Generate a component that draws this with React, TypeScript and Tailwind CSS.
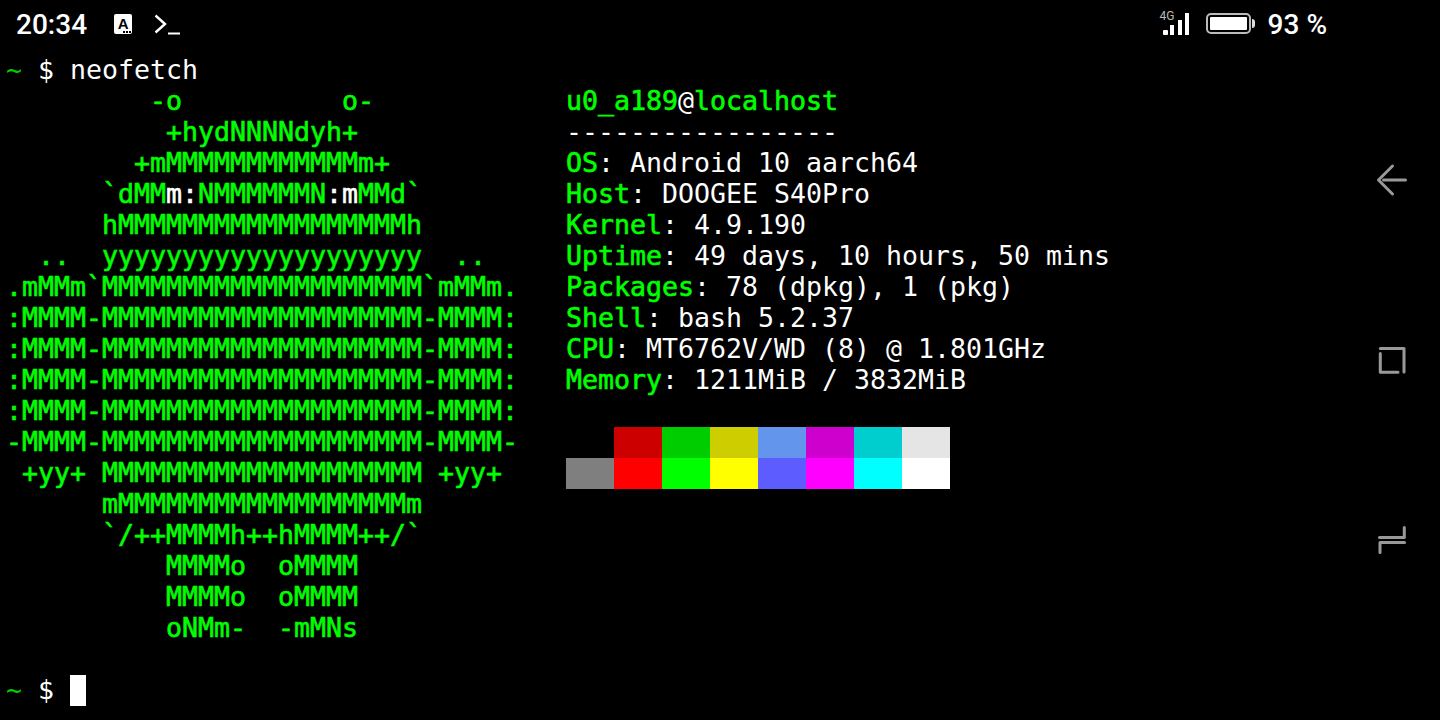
const LOGO_TOP = [
  '         -o          o-',
  '          +hydNNNNdyh+',
  '        +mMMMMMMMMMMMMm+',
]
const LOGO_BOTTOM = [
  '      hMMMMMMMMMMMMMMMMMMh',
  '  ..  yyyyyyyyyyyyyyyyyyyy  ..',
  '.mMMm`MMMMMMMMMMMMMMMMMMMM`mMMm.',
  ':MMMM-MMMMMMMMMMMMMMMMMMMM-MMMM:',
  ':MMMM-MMMMMMMMMMMMMMMMMMMM-MMMM:',
  ':MMMM-MMMMMMMMMMMMMMMMMMMM-MMMM:',
  ':MMMM-MMMMMMMMMMMMMMMMMMMM-MMMM:',
  '-MMMM-MMMMMMMMMMMMMMMMMMMM-MMMM-',
  ' +yy+ MMMMMMMMMMMMMMMMMMMM +yy+',
  '      mMMMMMMMMMMMMMMMMMMm',
  '      `/++MMMMh++hMMMM++/`',
  '          MMMMo  oMMMM',
  '          MMMMo  oMMMM',
  '          oNMm-  -mMNs',
]

const INFO = [
  ['OS', 'Android 10 aarch64'],
  ['Host', 'DOOGEE S40Pro'],
  ['Kernel', '4.9.190'],
  ['Uptime', '49 days, 10 hours, 50 mins'],
  ['Packages', '78 (dpkg), 1 (pkg)'],
  ['Shell', 'bash 5.2.37'],
  ['CPU', 'MT6762V/WD (8) @ 1.801GHz'],
  ['Memory', '1211MiB / 3832MiB'],
]

const DARK_COLORS = ['bg-[#000000]', 'bg-[#cd0000]', 'bg-[#00cd00]', 'bg-[#cdcd00]', 'bg-[#6495ed]', 'bg-[#cd00cd]', 'bg-[#00cdcd]', 'bg-[#e5e5e5]']
const LIGHT_COLORS = ['bg-[#7f7f7f]', 'bg-[#ff0000]', 'bg-[#00ff00]', 'bg-[#ffff00]', 'bg-[#5c5cff]', 'bg-[#ff00ff]', 'bg-[#00ffff]', 'bg-[#ffffff]']

const StatusBar = () => (
  <div className="h-[55px] flex items-center pl-[16px] pr-[17px] text-white font-['Roboto',sans-serif] font-medium text-[28px]">
    <span className="leading-none pb-[5px]">20:34</span>
    <div className="relative w-[18px] h-[20px] ml-[27px] mb-[8px] rounded-[2px] bg-white flex justify-center text-black">
      <span className="font-['Liberation_Sans',sans-serif] font-bold text-[15px] leading-[19px]">A</span>
      <div className="absolute right-[1px] bottom-[1px] flex gap-[1px]">
        <div className="w-[2px] h-[2px] bg-black" />
        <div className="w-[2px] h-[2px] bg-black" />
        <div className="w-[2px] h-[2px] bg-black" />
      </div>
    </div>
    <svg className="ml-[22px] mb-[6px]" width="28" height="22" viewBox="0 0 28 22" fill="none" stroke="white">
      <path d="M1.5 1.5 L11 10 L1.5 18.5" strokeWidth="2.4" />
      <path d="M14 19.5 H26" strokeWidth="2" />
    </svg>
    <div className="flex-1" />
    <div className="relative w-[30px] h-[26px] mb-[8px]">
      <svg width="30" height="26" viewBox="0 0 30 26" fill="white">
        <rect x="3" y="19" width="5" height="5" rx="1" />
        <rect x="10" y="14" width="4" height="10" />
        <rect x="18" y="9" width="4" height="15" />
        <rect x="25" y="2" width="4" height="22" />
      </svg>
      <span className="absolute left-0 top-[-1px] text-[12px] leading-[12px] font-normal text-[#bbbbbb]">4G</span>
    </div>
    <div className="ml-[16px] mb-[8px] w-[45px] h-[21px] rounded-[5px] border-2 border-[#bbbbbb] p-[2px]">
      <div className="w-[37px] h-full rounded-[1px] bg-white" />
    </div>
    <div className="w-[3px] h-[9px] mb-[8px] ml-[1px] rounded-r-full bg-[#dddddd]" />
    <span className="ml-[13px] leading-none pb-[5px]">93 %</span>
  </div>
)

const Prompt = ({ children }: { children?: React.ReactNode }) => (
  <div className="h-[31px] whitespace-pre">
    <span className="text-[#00cd00]">~</span> <span>$</span> {children}
  </div>
)

const Logo = () => (
  <div className="w-[560px] shrink-0 whitespace-pre text-[#00ff00] [-webkit-text-stroke-width:0.6px]">
    {LOGO_TOP.map((line, i) => <div key={i} className="h-[31px]">{line}</div>)}
    <div className="h-[31px]">
      {'      `dMM'}<span className="text-white">m:</span>NMMMMMMN<span className="text-white">:m</span>{'MMd`'}
    </div>
    {LOGO_BOTTOM.map((line, i) => <div key={i} className="h-[31px]">{line}</div>)}
  </div>
)

const Info = () => (
  <div className="whitespace-pre">
    <div className="h-[31px] text-[#00ff00] [-webkit-text-stroke-width:0.6px]">u0_a189<span className="text-white [-webkit-text-stroke-width:0px]">@</span>localhost</div>
    <div className="h-[31px]">-----------------</div>
    {INFO.map(([label, value]) => (
      <div key={label} className="h-[31px]">
        <span className="text-[#00ff00] [-webkit-text-stroke-width:0.6px]">{label}</span>: {value}
      </div>
    ))}
    <div className="h-[31px]" />
    <div className="grid grid-cols-[repeat(8,48px)] auto-rows-[31px]">
      {DARK_COLORS.map((c) => <div key={c} className={c} />)}
      {LIGHT_COLORS.map((c) => <div key={c} className={c} />)}
    </div>
  </div>
)

const NavBar = () => (
  <div className="w-[96px] shrink-0 flex flex-col items-center justify-center gap-[144px]">
    <svg width="36" height="36" viewBox="0 0 36 36" fill="none" stroke="#999999" strokeWidth="3" strokeLinecap="round" strokeLinejoin="round">
      <path d="M18.5 4 L4.5 18 L18.5 32 M9.5 18 H31.5" />
    </svg>
    <svg width="36" height="36" viewBox="0 0 36 36" fill="none" stroke="#999999" strokeWidth="3" strokeLinecap="round" strokeLinejoin="round">
      <path d="M6.3 6.5 H30 V30" />
      <path d="M6.3 11.5 V30.2 H24" />
    </svg>
    <svg width="36" height="36" viewBox="0 0 36 36" fill="none" stroke="#999999" strokeWidth="3" strokeLinecap="round" strokeLinejoin="round">
      <path d="M30.3 5.5 V15.5 H5.5" />
      <path d="M30.5 20.5 H6 V30.5" />
    </svg>
  </div>
)

export default function App() {
  return (
    <div className="w-[1440px] h-[720px] flex bg-black overflow-hidden text-white font-['DejaVu_Sans_Mono',monospace] text-[26.58px] leading-[29px]">
      <div className="flex-1 min-w-0 flex flex-col">
        <StatusBar />
        <div className="pl-[6px]">
          <Prompt>neofetch</Prompt>
          <div className="flex">
            <Logo />
            <Info />
          </div>
          <div className="h-[31px]" />
          <div className="flex h-[31px]">
            <Prompt />
            <div className="w-[16px] h-[31px] bg-white" />
          </div>
        </div>
      </div>
      <NavBar />
    </div>
  )
}
